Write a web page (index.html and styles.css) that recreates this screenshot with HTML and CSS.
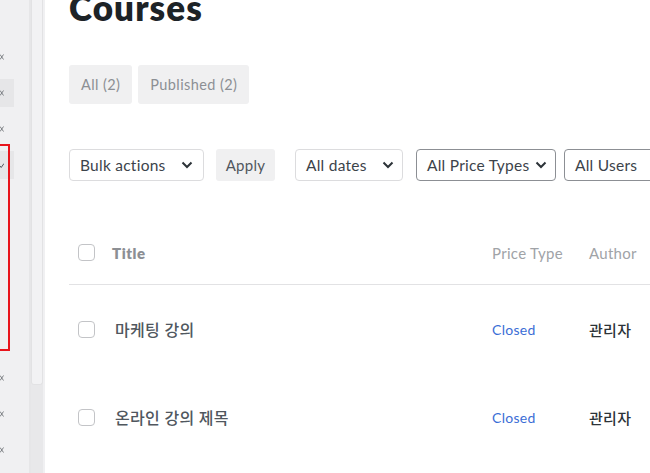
FILE: index.html
```html
<!DOCTYPE html>
<html>
<head>
<meta charset="utf-8">
<link rel="stylesheet" href="styles.css">
</head>
<body>
<div class="app">
  <aside class="sidebar">
    <div class="menu">
      <div class="item"><svg class="chev" viewBox="0 0 4 8"><path d="M0 1.5 L1.8 4 L0 6.5 M3.5 1.5 L1.8 4 L3.5 6.5" /></svg></div>
      <div class="item active"><svg class="chev" viewBox="0 0 4 8"><path d="M0 1.5 L1.8 4 L0 6.5 M3.5 1.5 L1.8 4 L3.5 6.5" /></svg></div>
      <div class="item"><svg class="chev" viewBox="0 0 4 8"><path d="M0 1.5 L1.8 4 L0 6.5 M3.5 1.5 L1.8 4 L3.5 6.5" /></svg></div>
      <div class="item active open"><svg class="chev" viewBox="0 0 4 8"><path d="M0 5 L1.2 6.5 L4 2.5" /></svg></div>
      <div class="submenu"></div>
      <div class="item"><svg class="chev" viewBox="0 0 4 8"><path d="M0 1.5 L1.8 4 L0 6.5 M3.5 1.5 L1.8 4 L3.5 6.5" /></svg></div>
      <div class="item"><svg class="chev" viewBox="0 0 4 8"><path d="M0 1.5 L1.8 4 L0 6.5 M3.5 1.5 L1.8 4 L3.5 6.5" /></svg></div>
      <div class="item"><svg class="chev" viewBox="0 0 4 8"><path d="M0 1.5 L1.8 4 L0 6.5 M3.5 1.5 L1.8 4 L3.5 6.5" /></svg></div>
    </div>
    <div class="scrollbar"><div class="thumb"></div></div>
    <div class="highlight-box"></div>
  </aside>
  <main class="main">
    <h1 class="title">Courses</h1>
    <div class="tabs">
      <span class="tab">All (2)</span>
      <span class="tab">Published (2)</span>
    </div>
    <div class="filters">
      <div class="select w-bulk">Bulk actions<svg class="caret" viewBox="0 0 12 8"><path d="M1.5 1.5 L6 6 L10.5 1.5"/></svg></div>
      <button class="btn">Apply</button>
      <div class="select w-dates">All dates<svg class="caret" viewBox="0 0 12 8"><path d="M1.5 1.5 L6 6 L10.5 1.5"/></svg></div>
      <div class="select dark w-price">All Price Types<svg class="caret" viewBox="0 0 12 8"><path d="M1.5 1.5 L6 6 L10.5 1.5"/></svg></div>
      <div class="select dark w-users">All Users<svg class="caret" viewBox="0 0 12 8"><path d="M1.5 1.5 L6 6 L10.5 1.5"/></svg></div>
    </div>
    <div class="table">
      <div class="row head">
        <div class="cell check"><span class="cb"></span></div>
        <div class="cell th-title">Title</div>
        <div class="cell th">Price Type</div>
        <div class="cell th">Author</div>
      </div>
      <div class="row body">
        <div class="cell check"><span class="cb"></span></div>
        <div class="cell name">마케팅 강의</div>
        <div class="cell link">Closed</div>
        <div class="cell author">관리자</div>
      </div>
      <div class="row body">
        <div class="cell check"><span class="cb"></span></div>
        <div class="cell name">온라인 강의 제목</div>
        <div class="cell link">Closed</div>
        <div class="cell author">관리자</div>
      </div>
    </div>
  </main>
</div>
</body>
</html>
```
FILE: styles.css
```css
* { box-sizing: border-box; }
html, body { margin: 0; padding: 0; background: #fff; }
body {
  width: 650px;
  height: 473px;
  overflow: hidden;
  font-family: Lato, "Noto Sans CJK KR", sans-serif;
  color: #3c434a;
}
.app { display: flex; height: 473px; }

.sidebar {
  position: relative;
  width: 45px;
  flex: none;
  display: flex;
  background: #f0f0f2;
}
.menu {
  width: 31px;
  padding-top: 39px;
  border-right: 2px solid #e6e6e8;
}
.item {
  height: 36px;
  display: flex;
  align-items: center;
  width: 14px;
}
.item.active { background: #e6e6e8; height: 28px; margin: 4px 0; }
.submenu { height: 177px; }
.chev { width: 4px; height: 8px; fill: none; stroke: #7d8085; stroke-width: 1; }
.item.open .chev { stroke: #50575e; }
.scrollbar {
  width: 12px;
  background: #e8e8ea;
  display: flex;
  flex-direction: column;
}
.thumb {
  height: 385px;
  background: #f2f2f4;
  border: 1px solid #e2e2e4;
  border-top: none;
  border-radius: 0 0 3px 3px;
}
.highlight-box {
  position: absolute;
  left: -2px;
  top: 144px;
  width: 12px;
  height: 207px;
  border: 2px solid #e8141c;
}

.main {
  flex: 1;
  padding-left: 24px;
  min-width: 0;
}
.title {
  margin: -13px 0 0 0;
  font-size: 35px;
  line-height: 40px;
  font-weight: 800;
  color: #1d2327;
  letter-spacing: 1.1px;
}
.tabs {
  display: flex;
  gap: 6px;
  margin-top: 38px;
}
.tab {
  height: 39px;
  padding: 0 12px;
  display: flex;
  align-items: center;
  background: #f0f0f1;
  border-radius: 3px;
  color: #8c8f94;
  font-size: 14.5px;
  letter-spacing: 0.4px;
}
.filters {
  display: flex;
  margin-top: 45px;
  align-items: center;
}
.select {
  height: 32px;
  flex: none;
  display: flex;
  align-items: center;
  justify-content: space-between;
  padding: 0 8px 0 10px;
  border: 1px solid #dcdcde;
  border-radius: 4px;
  font-size: 15.5px;
  letter-spacing: 0.25px;
  color: #3c434a;
  background: #fff;
}
.select.dark { border-color: #8c8f94; }
.caret { width: 12px; height: 8px; fill: none; stroke: #2c3338; stroke-width: 2; flex: none; }
.w-bulk { width: 135px; padding-right: 10px; }
.w-dates { width: 108px; margin-left: 20px; }
.w-price { width: 140px; margin-left: 13px; }
.w-users { width: 110px; margin-left: 8px; }
.btn {
  flex: none;
  margin-left: 12px;
  height: 32px;
  width: 59px;
  border: none;
  border-radius: 3px;
  background: #f0f0f1;
  color: #50575e;
  font-family: inherit;
  font-size: 15px;
  letter-spacing: 0.3px;
  padding: 0;
}

.table { margin-top: 40px; width: 640px; }
.row {
  display: grid;
  grid-template-columns: 43px 380px 97px 1fr;
  align-items: center;
}
.row.head { height: 64px; border-bottom: 1px solid #e2e2e4; }
.row.body { height: 88px; }
.cell.check { padding-left: 9px; display: flex; }
.cb {
  width: 17px;
  height: 17px;
  border: 1px solid #c3c4c7;
  border-radius: 4px;
  background: #fff;
}
.th-title { font-weight: 800; font-size: 15px; color: #8c8f94; letter-spacing: 0.6px; }
.th { font-size: 15px; color: #a0a3a7; letter-spacing: 0.3px; }
.name { padding-left: 3px; font-size: 16px; font-weight: 500; color: #50575e; letter-spacing: 0.3px; }
.link { font-size: 14px; color: #3b6ed6; letter-spacing: 0.3px; }
.author { font-size: 15px; font-weight: 500; color: #2c3338; letter-spacing: 0.3px; }
```
